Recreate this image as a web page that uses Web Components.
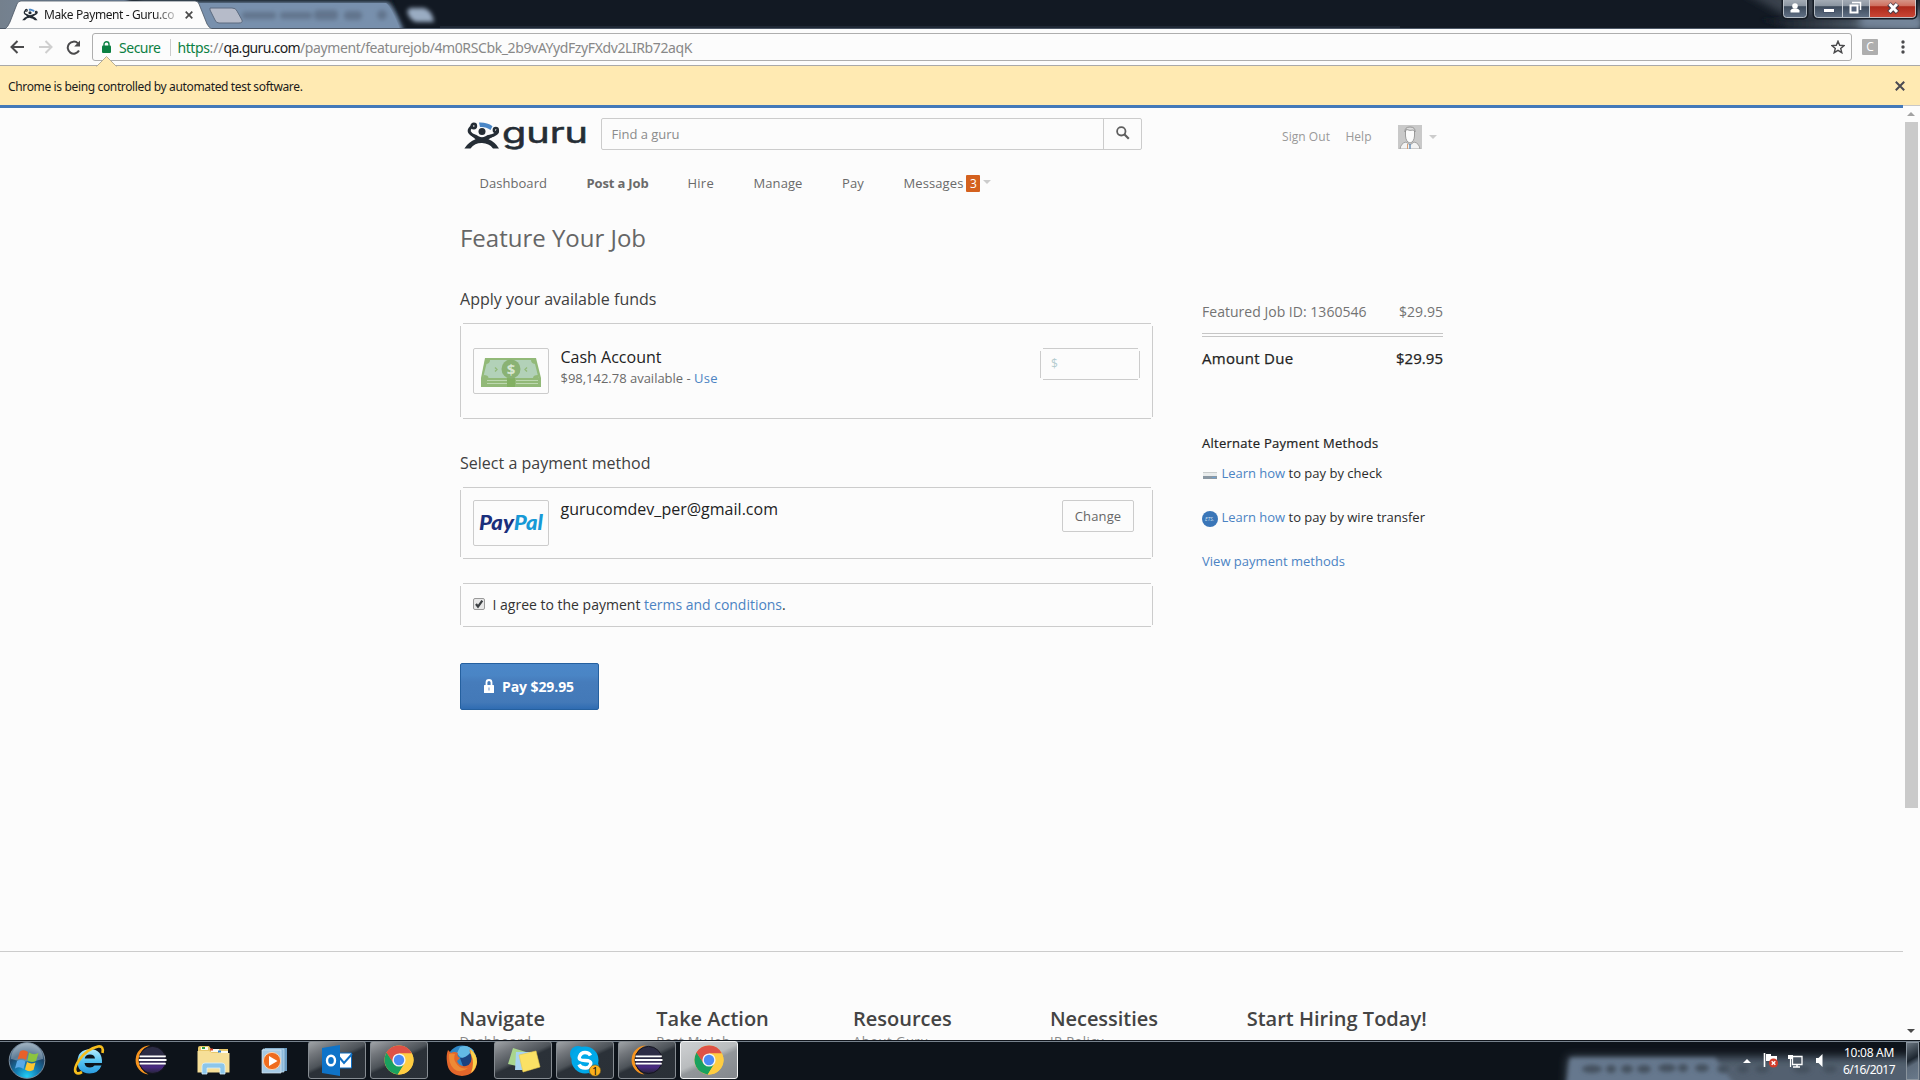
<!DOCTYPE html>
<html lang="en">
<head>
<meta charset="utf-8">
<title>Make Payment - Guru.com</title>
<style>
html,body{margin:0;height:100%;overflow:hidden;background:#fcfcfc}
body{font-family:"Open Sans","Noto Sans",sans-serif;font-size:13px;color:#2b2b2b}
</style>
</head>
<body>
<desktop-screen></desktop-screen>
<script>
/* Text run whose letter-spacing is adjusted to a given advance width (w). */
class FitText extends HTMLElement {
  constructor() {
    super();
    this.attachShadow({ mode: 'open' }).innerHTML =
      '<style>:host{display:inline-block;white-space:pre;flex:none}</style><slot></slot>';
  }
  connectedCallback() {
    const w = parseFloat(this.getAttribute('w'));
    if (!w) return;
    const n = this.textContent.length;
    const natural = this.getBoundingClientRect().width;
    if (natural && n) this.style.letterSpacing = ((w - natural) / n).toFixed(3) + 'px';
  }
}
customElements.define('fit-text', FitText);

const define = (name, html) => customElements.define(name, class extends HTMLElement {
  constructor() {
    super();
    this.attachShadow({ mode: 'open' });
    const t = document.createElement('template');
    t.innerHTML = '<style>*{box-sizing:border-box}svg{display:block;flex:none}</style>' + html;
    this.shadowRoot.append(document.importNode(t.content, true));
  }
});

/* Hairline frame whose four sides stop short of the corners. */
const frame = `border:1px solid transparent;background-origin:border-box;background-clip:border-box;background-repeat:no-repeat;
background-image:linear-gradient(#ccc,#ccc),linear-gradient(#ccc,#ccc),linear-gradient(#ccc,#ccc),linear-gradient(#ccc,#ccc);
background-position:50% 0,50% 100%,0 50%,100% 50%;
background-size:calc(100% - 5px) 1px,calc(100% - 5px) 1px,1px calc(100% - 5px),1px calc(100% - 5px);`;

/* ---------- icons ---------- */
define('guru-figure', `<style>:host{display:block;flex:none}svg{width:100%;height:100%}</style>
<svg viewBox="0 0 36 27">
 <path d="M15 .6C20 .3 25 1.5 28.500 4.200L26.500 8C23.500 5.600 19.500 4.600 16 5z" fill="#4a87c7"/>
 <g fill="none" stroke="#252d35" stroke-linecap="round">
  <circle cx="9.800" cy="4" r="1.300" stroke-width="4.200"/>
  <path d="M7.200 5C3.500 8.500 5 11.500 10.500 14" stroke-width="3"/>
  <path d="M25.500 14.500Q34 12 33.500 9" stroke-width="3.200"/>
  <circle cx="31.800" cy="8" r="1.200" stroke-width="4"/>
 </g>
 <circle cx="18" cy="9.600" r="3.500" fill="#252d35"/>
 <path d="M6 12.500Q12 11.800 14.500 14.200Q18 16.200 21.500 14.200Q25 11.800 31 13.500L24.500 17.300Q31 20 35 26.400H29Q25 21.300 18 21.100T6.500 26.400H.4Q5 19.500 11.500 17.300z" fill="#252d35"/>
</svg>`);

define('ico-eclipse', `<style>:host{display:block;flex:none;width:32px;height:30px}</style>
<svg width="32" height="30" viewBox="0 0 32 30"><defs><linearGradient id="g" x2="0" y2="1"><stop offset=".5" stop-color="#2c2c45"/><stop offset=".75" stop-color="#4b2a85"/><stop offset="1" stop-color="#242437"/></linearGradient></defs>
<path d="M15 .5A14.600 14.600 0 0 0 13.500 29.600 15.500 15.500 0 0 1 15 .5z" fill="#f7941e"/>
<circle cx="17.500" cy="15" r="13.600" fill="url(#g)" stroke="#14141f"/>
<path d="M4.500 11.300H30.800M3.800 15H31.500M4.500 18.700H30.800" stroke="#fff" stroke-width="1.800"/></svg>`);

define('ico-chrome', `<style>:host{display:block;flex:none;width:30px;height:30px}</style>
<svg width="30" height="30" viewBox="0 0 30 30">
<circle cx="15" cy="15" r="14.500" fill="#ffcd42"/>
<path d="M15 15L2.440 7.750A14.500 14.500 0 0 1 27.900 8.400H15z" fill="#de5246"/>
<path d="M2.440 7.750A14.500 14.500 0 0 0 13.800 29.450L20.700 18.300 15 15 9.300 18.300z" fill="#1aa15f"/>
<path d="M15 8.400H27.900A14.500 14.500 0 0 1 13.800 29.450L20.700 18.300z" fill="#ffcd42"/>
<path d="M2.440 7.750L9.300 18.300 15 15V8.400L6 4z" fill="#de5246"/>
<path d="M2.440 7.750L9.500 18.500 6 22 1.500 19z" fill="#1aa15f"/>
<circle cx="15" cy="15" r="6.600" fill="#f4f4f4"/><circle cx="15" cy="15" r="5.200" fill="#4b8bf5"/></svg>`);

/* ---------- browser chrome ---------- */
define('tab-strip', `<style>
:host{display:flex;position:relative;height:29px;align-items:flex-start;padding-left:22px;background:#121923;overflow:hidden;font-family:"Noto Sans","Open Sans",sans-serif}
.bg{position:absolute;left:0;top:0}
guru-figure{width:16px;height:13px;margin:8px 6px 0 0;position:relative}
.t{position:relative;width:131px;overflow:hidden;font-size:12px;line-height:18px;margin-top:6px;color:#1a1a1a;-webkit-mask:linear-gradient(90deg,#000 110px,transparent 138px)}
.x{position:relative;margin:11px 0 0 10px}
</style>
<svg class="bg" width="1920" height="29">
 <defs>
  <filter id="b" x="-20%" y="-60%" width="140%" height="220%"><feGaussianBlur stdDeviation="4"/></filter>
  <filter id="c" x="-20%" y="-60%" width="140%" height="220%"><feGaussianBlur stdDeviation="2"/></filter>
  <linearGradient id="l"><stop stop-color="#74808d"/><stop offset="1" stop-color="#7890ad"/></linearGradient>
  <linearGradient id="r"><stop stop-color="#121923"/><stop offset=".45" stop-color="#39434e"/><stop offset="1" stop-color="#6f8193"/></linearGradient>
  <linearGradient id="gl" x2="0" y2="1"><stop stop-color="#b9bfc7"/><stop offset=".45" stop-color="#8c96a2"/><stop offset=".5" stop-color="#3e4b5c"/><stop offset="1" stop-color="#65758a"/></linearGradient>
  <linearGradient id="rd" x2="0" y2="1"><stop stop-color="#dbaea2"/><stop offset=".45" stop-color="#cf7060"/><stop offset=".5" stop-color="#ad2a1b"/><stop offset="1" stop-color="#cb4636"/></linearGradient>
 </defs>
 <rect width="1920" height="29" fill="#121923"/>
 <path d="M0 0H140V29H0z" fill="url(#l)"/>
 <path d="M128-4L390-4 404 34H128z" fill="#0d141d" filter="url(#c)"/>
 <path d="M140 2H388Q394 6 404 31H140z" fill="#7890ad" filter="url(#c)"/>
 <path d="M196 3H386Q391 6 400 29H205z" fill="#7890ad"/>
 <g fill="#62758d" filter="url(#c)"><rect x="242" y="12" width="34" height="7" rx="3"/><rect x="280" y="12" width="32" height="7" rx="3"/><rect x="314" y="10" width="24" height="10" rx="4"/><rect x="344" y="11" width="18" height="9" rx="4"/><circle cx="382" cy="15" r="5"/></g>
 <path d="M410 8H424Q432 10 434 22H416Q409 20 407 11z" fill="#9aacc2" filter="url(#c)"/>
 <path d="M210 8H232Q236 8 237 11L242 20Q243 23 239 23H219Q216 23 215 20L210 10z" fill="#b6bbc9" stroke="#5c6b80"/>
 <path d="M440 29V26H1400V29z" fill="#1f2835"/>
 <path d="M1740-10L1790 18 1920 26V0z" fill="#3a434d" filter="url(#b)"/>
 <path d="M1760 19H1920V29H1790z" fill="url(#r)" filter="url(#c)"/>
 <path d="M1860 10H1920V29H1860z" fill="#74859a" filter="url(#b)"/>
 <rect x="1782.500" y="-5" width="25" height="23.500" rx="4" fill="url(#gl)" stroke="#151b24" stroke-width="2"/>
 <rect x="1783.500" y="-5" width="23" height="22.500" rx="3" fill="none" stroke="#d5dbe1" stroke-opacity=".8"/>
 <path d="M1790.500 12.500v-2q1-2 3-2h3q2 0 3 2v2z" fill="#fff"/><circle cx="1795" cy="6" r="2.800" fill="#fff"/>
 <rect x="1813.500" y="-5" width="103" height="23.500" rx="4" fill="url(#gl)" stroke="#151b24" stroke-width="2"/>
 <path d="M1870-4H1916V14Q1916 17.500 1912 17.500H1870z" fill="url(#rd)"/>
 <rect x="1814.500" y="-5" width="101" height="22.500" rx="3" fill="none" stroke="#d5dbe1" stroke-opacity=".8"/>
 <path d="M1842.500 0V17M1869.500 0V17" stroke="#c9ced4"/>
 <rect x="1823.500" y="8.500" width="11" height="4" fill="#fff" stroke="#46536a"/>
 <path d="M1852 2.500H1860.500V10" stroke="#fff" stroke-width="1.500" fill="none"/><path d="M1850.500 5.500h7v7h-7z" fill="#56647a" stroke="#fff" stroke-width="2"/>
 <path d="M1889 4L1897.500 12.500M1897.500 4L1889 12.500" stroke="#4b3b46" stroke-width="5"/><path d="M1889.500 4L1897 12M1897 4L1889.500 12" stroke="#fff" stroke-width="3"/>
 <path d="M5 29Q8 27 10 22L17 4Q18 1 21 1H195Q198 1 199 4L207 24Q209 28 212 29z" fill="#fcfcfc" stroke="#4a5563" stroke-width=".8"/>
 <path d="M0 28.500H5M212 28.500H1920" stroke="#4c5766"/>
</svg>
<guru-figure></guru-figure><div class="t"><fit-text w="130">Make Payment - Guru.co</fit-text></div>
<svg class="x" width="8" height="8"><path d="M.7.7L7.300 7.300M7.300.7L.7 7.300" stroke="#4a4a4a" stroke-width="1.700"/></svg>`);

define('browser-toolbar', `<style>
:host{display:flex;height:36px;align-items:center;background:#fcfcfc;padding:0 15px 0 10px;font-family:"Noto Sans","Open Sans",sans-serif;font-size:14px;box-sizing:border-box}
.nav{display:flex;width:82px;gap:13px;align-items:center}
.omni{display:flex;flex:1;height:28px;border:1px solid #aeaeae;border-radius:3px;align-items:center;padding:0 6px 0 9px;margin-right:10px}
.g{color:#0b8043}.d{color:#888}.k{color:#1c1c1c}
.sep{width:1px;height:17px;background:#ccc;margin:0 7px 0 9px}
.u{display:flex;flex:1}
.ext{width:16px;height:16px;background:#aeaeae;border-radius:1px;color:#fff;font:12px/16px "Open Sans",sans-serif;text-align:center;margin-right:23px}
</style>
<div class="nav">
<svg width="15" height="14" viewBox="0 0 15 14"><path d="M14 7H2M7.500 1L1.500 7l6 6" fill="none" stroke="#4a4a4c" stroke-width="2"/></svg>
<svg width="15" height="14" viewBox="0 0 15 14"><path d="M1 7H13M7.500 1l6 6-6 6" fill="none" stroke="#cfcfcf" stroke-width="2"/></svg>
<svg width="15" height="15" viewBox="0 0 15 15"><path d="M13 10.500A6 6 0 1 1 12 3.400" fill="none" stroke="#4a4a4c" stroke-width="2"/><path d="M14 .6V6.500H8.200z" fill="#4a4a4c"/></svg>
</div>
<div class="omni">
<svg width="9" height="12" viewBox="0 0 9 12" style="margin-right:8px"><path d="M2 5V3.200a2.500 2.500 0 0 1 5 0V5" fill="none" stroke="#0b8043" stroke-width="1.400"/><rect y="4.500" width="9" height="7.500" rx="1" fill="#0b8043"/></svg>
<fit-text class="g" w="41.500">Secure</fit-text><span class="sep"></span>
<div class="u"><fit-text class="g" w="32">https</fit-text><fit-text class="d" w="14">://</fit-text><fit-text class="k" w="76.500">qa.guru.com</fit-text><fit-text class="d" w="392">/payment/featurejob/4m0RSCbk_2b9vAYydFzyFXdv2LIRb72aqK</fit-text></div>
<svg width="14" height="14" viewBox="0 0 14 14"><path d="M7 1.200L8.700 5.300 13 5.600 9.700 8.400 10.800 12.700 7 10.300 3.200 12.700 4.300 8.400 1 5.600 5.300 5.300z" fill="none" stroke="#4a4a4c" stroke-width="1.400"/></svg>
</div>
<div class="ext">C</div>
<svg width="4" height="14"><g fill="#4a4a4c"><circle cx="2" cy="2" r="1.700"/><circle cx="2" cy="7" r="1.700"/><circle cx="2" cy="12" r="1.700"/></g></svg>`);

define('info-bar', `<style>
:host{display:flex;height:40px;box-sizing:border-box;position:relative;border-top:1px solid #a9a9a9;background:#ffeab2;align-items:center;justify-content:space-between;padding:2px 15px 0 8px;font:12px "Noto Sans","Open Sans",sans-serif;color:#1b1b1b}
.n{position:absolute;left:96px;top:-10px}
</style>
<svg class="n" width="21" height="11"><path d="M.5 10.500L10.500.500 20.500 10.500" fill="#ffeab2" stroke="#b5ad96"/><path d="M1.500 10.500H19.500" stroke="#ffeab2"/></svg>
<fit-text w="294.500">Chrome is being controlled by automated test software.</fit-text>
<svg width="10" height="10" style="margin-top:-2px"><path d="M.8.8L9.200 9.200M9.200.8L.8 9.200" stroke="#4a4a52" stroke-width="2"/></svg>`);

define('scroll-bar', `<style>
:host{display:flex;flex-direction:column;align-items:center;width:17px;background:#fcfcfc;border-top:1px solid #c8c8c8;box-sizing:border-box;padding:6px 1px 7px 0}
.th{width:13px;height:686px;background:#cacaca;margin:6px 0 auto 1px}
</style>
<svg width="8" height="4"><path d="M0 4L4 0 8 4z" fill="#a2a2a2"/></svg><div class="th"></div><svg width="8" height="4"><path d="M0 0L4 4 8 0z" fill="#4a4a4a"/></svg>`);

/* ---------- page header ---------- */
define('guru-logo', `<style>:host{display:flex;width:124px;height:30px}guru-figure{width:36px;height:27px}</style>
<guru-figure></guru-figure>
<svg width="86" height="30" style="margin-left:2px;overflow:visible"><text x="0" y="20.500" textLength="86" lengthAdjust="spacingAndGlyphs" font-family="Inter" font-weight="400" font-size="29" fill="#252d35" stroke="#252d35" stroke-width=".5">guru</text></svg>`);

define('search-box', `<style>
:host{display:flex;width:541px;height:32px;box-sizing:border-box;border:1px solid #ccc;border-radius:2px;background:#fcfcfc}
.f{flex:1;padding-left:9.500px;line-height:31px;color:#8b8b8b}
.b{width:38px;border-left:1px solid #ccc;display:flex;align-items:center;justify-content:center;padding-bottom:2px}
</style>
<div class="f"><fit-text w="68">Find a guru</fit-text></div>
<div class="b"><svg width="14" height="14" viewBox="0 0 14 14"><circle cx="5.300" cy="5.300" r="4.200" fill="none" stroke="#5f5f5f" stroke-width="1.800"/><path d="M8.300 8.300L12.800 12.800" stroke="#5f5f5f" stroke-width="2.200"/></svg></div>`);

define('user-links', `<style>
:host{display:flex;color:#999;font-size:12px;line-height:18px;align-items:flex-start}
.a{margin:4px 7px 0 26px}
</style>
<fit-text w="48" style="margin:7px 15.500px 0 0">Sign Out</fit-text><fit-text w="26" style="margin-top:7px">Help</fit-text>
<svg class="a" width="24" height="24" viewBox="0 0 24 24"><rect width="24" height="24" fill="#c9c9c9"/><path d="M2 24Q3 18 8 17L12 20 16 17Q21 18 22 24z" fill="#f3f3f3" stroke="#929292" stroke-width=".8"/><path d="M7.500 6Q7.500 3 12 3T16.500 6V11Q16 17 12 18Q8 17 7.500 11z" fill="#fbfbfb" stroke="#929292" stroke-width=".9"/><path d="M7 7Q6.500 2 12 2T17 7L15.500 5Q12 6 8.500 4.500z" fill="#ddd" stroke="#888" stroke-width=".8"/><path d="M12 19V24" stroke="#6d93ba" stroke-width="1.500"/><path d="M9.500 19V24" stroke="#d59b72"/></svg>
<svg width="8" height="4" style="margin-top:14px"><path d="M0 0H8L4 4z" fill="#ccc"/></svg>`);

define('nav-menu', `<style>
:host{display:flex;height:18px;line-height:18px;color:#6a6a6a;align-items:center}
b{font-weight:700}
.n{background:#d4611e;color:#fff;width:14px;height:17px;border-radius:1px;font-size:12px;line-height:17px;text-align:center;margin:0 3px 0 3px}
</style>
<fit-text w="67.500" style="margin-right:39.500px">Dashboard</fit-text>
<b style="margin-right:39px"><fit-text w="62">Post a Job</fit-text></b>
<fit-text w="26.500" style="margin-right:39.500px">Hire</fit-text>
<fit-text w="49" style="margin-right:39.500px">Manage</fit-text>
<fit-text w="22" style="margin-right:39.500px">Pay</fit-text>
<fit-text w="60">Messages</fit-text><span class="n">3</span>
<svg width="8" height="4" style="margin-top:-2px"><path d="M0 0H8L4 4z" fill="#ccc"/></svg>`);

/* ---------- payment form ---------- */
define('outline-box', `<style>
:host{display:flex;box-sizing:border-box;width:693px;${frame}}
::slotted(*){flex:none}
</style><slot></slot>`);

define('thumb-box', `<style>
:host{display:flex;width:76px;height:46px;box-sizing:border-box;border:1px solid #ccc;border-radius:2px;align-items:center;justify-content:center;margin-right:11.500px}
</style><slot></slot>`);

define('cash-icon', `<style>:host{display:block;margin-top:2px}</style>
<svg width="60" height="29" viewBox="0 0 60 29"><path d="M4 0H55L60 20V29H0V20z" fill="#92b978"/><path d="M6.500 2H53L57.500 20H2z" fill="#b2d1b8"/><path d="M4.500 6Q9 6 9 2H6zM55 6Q50 6 50 2h3.500zM2.500 17q5 0 5 3H2zM57 17q-5 0-5 3h5.500z" fill="#92b978"/>
<path d="M6 22.500H26M35 22.500H57M6 25.500H26M35 25.500H57" stroke="#bdd8b0" stroke-width="1"/>
<rect x="26" y="20" width="8" height="9" fill="#82b062"/><ellipse cx="30" cy="11" rx="9.500" ry="9.500" fill="#8ab274"/>
<text x="30" y="16.500" text-anchor="middle" font-family="Open Sans" font-weight="700" font-size="15" fill="#d6e6d0">$</text>
<path d="M14 9.500l2 2-2 2M46 9.500l-2 2 2 2" stroke="#92b978" fill="none" stroke-width="1.300"/></svg>`);

define('paypal-mark', `<style>:host{display:block}svg{overflow:visible}</style>
<svg width="66" height="32"><text x="1" y="22.500" font-family="Lato" font-style="italic" font-weight="900" font-size="20" textLength="64" lengthAdjust="spacingAndGlyphs" fill="#1a2f7c">Pay<tspan fill="#1799d6">Pal</tspan></text></svg>`);

define('pay-form', `<style>
:host{display:flex;flex-direction:column;width:693px;align-items:flex-start}
h1{margin:0;font-weight:400;font-size:24px;line-height:32px;color:#666}
h2{margin:0;font-weight:400;font-size:16px;line-height:24px;color:#404040}
.col{display:flex;flex-direction:column;flex:1 1 auto}
.big{font-size:16px;line-height:22px;color:#222}
.m{display:flex;line-height:20px;color:#6a6a6a}
a{color:#4b83c3}
.amt{width:100px;height:32px;${frame}padding-left:10px;line-height:29px;font-size:12px;color:#b4cccf}
.chg{width:72px;height:32px;border:1px solid #ccc;border-radius:2px;line-height:30px;text-align:center;color:#666}
.ag{font-size:14px;line-height:20px;display:flex;color:#333}
.pay{display:flex;width:139px;height:47px;border:1px solid #25609f;border-radius:2px;background:linear-gradient(#4b87c8,#4a85c5 25%,#467cbb 40%,#4379b8 85%,#2f6cb2);align-items:center;padding-left:23px;color:#fff;font-size:14px;font-weight:700;margin-top:36px;box-sizing:border-box}
</style>
<h1><fit-text w="186">Feature Your Job</fit-text></h1>
<h2 style="margin-top:33px"><fit-text w="196.500">Apply your available funds</fit-text></h2>
<outline-box style="height:96px;margin-top:12px;padding:24px 12px 0 12px">
 <thumb-box><cash-icon></cash-icon></thumb-box>
 <div class="col" style="margin-top:-2px"><div class="big"><fit-text w="101">Cash Account</fit-text></div>
 <div class="m"><fit-text w="133.500">$98,142.78 available - </fit-text><a><fit-text w="24">Use</fit-text></a></div></div>
 <div class="amt">$</div>
</outline-box>
<h2 style="margin-top:32px"><fit-text w="190.500">Select a payment method</fit-text></h2>
<outline-box style="height:72px;margin-top:12px;padding:12px 18px 0 12px">
 <thumb-box><paypal-mark></paypal-mark></thumb-box>
 <div class="col" style="margin-top:-2px"><div class="big"><fit-text w="217.500">gurucomdev_per@gmail.com</fit-text></div></div>
 <div class="chg"><fit-text w="46.500">Change</fit-text></div>
</outline-box>
<outline-box style="height:44px;margin-top:24px;padding:11px 12px 0 12px">
 <svg width="12" height="12" style="margin:3px 7.500px 0 0"><rect x=".5" y=".5" width="11" height="11" rx="1.500" fill="#e8e8e8" stroke="#9a9a9a"/><path d="M3 6L5 8.700 9.300 2.600" fill="none" stroke="#3b3f42" stroke-width="2.200"/></svg>
 <div class="ag"><fit-text w="151.500">I agree to the payment </fit-text><a><fit-text w="138">terms and conditions</fit-text></a>.</div>
</outline-box>
<div class="pay"><svg width="10" height="14" viewBox="0 0 10 14" style="margin:-1px 8px 0 0"><path d="M2.500 7V3.500a2.500 2.500 0 0 1 5 0V7" fill="none" stroke="#fff" stroke-width="1.800"/><rect y="6" width="10" height="8" rx=".5" fill="#fff"/><path d="M5 8.500v3" stroke="#7ea2cf" stroke-width="1.200"/></svg><fit-text w="72">Pay $29.95</fit-text></div>`);

define('order-summary', `<style>
:host{display:flex;flex-direction:column;width:241px;color:#2b2b2b}
.r{display:flex;justify-content:space-between;line-height:20px;font-size:14px;color:#737373}
.dbl{height:4px;border:1px solid #c6c6c6;border-left:0;border-right:0;margin:11px 0 11px}
.due{color:#222;font-size:15px;font-weight:500;-webkit-text-stroke:.25px #222}
h3{margin:66px 0 0;font-size:13px;line-height:18px;font-weight:500;color:#222;-webkit-text-stroke:.2px #222}
.l{display:flex;line-height:18px;align-items:flex-start}
a{color:#4b83c3}
</style>
<div class="r"><fit-text w="164.500">Featured Job ID: 1360546</fit-text><fit-text w="44">$29.95</fit-text></div>
<div class="dbl"></div>
<div class="r due"><fit-text w="91.500">Amount Due</fit-text><fit-text w="47">$29.95</fit-text></div>
<h3><fit-text w="176.500">Alternate Payment Methods</fit-text></h3>
<div class="l" style="margin-top:12px"><svg width="14" height="7" style="margin:8px 4.500px 0 1px"><path d="M0 0H14V7H0z" fill="#e9ecec"/><path d="M0 .5H14" stroke="#c9cdcd"/><path d="M0 4H14V7H0z" fill="#8b98a3"/><path d="M9 5.500h4" stroke="#6fa0cf"/></svg><a><fit-text w="67">Learn how </fit-text></a><fit-text w="93.500">to pay by check</fit-text></div>
<div class="l" style="margin-top:26px"><svg width="16" height="16" style="margin:3px 3.500px 0 0"><circle cx="8" cy="8" r="8" fill="#3a76b8"/><text x="7.500" y="9.500" text-anchor="middle" font-family="Open Sans" font-style="italic" font-size="5" fill="#d5e3f2">ETS.</text></svg><a><fit-text w="67">Learn how </fit-text></a><fit-text w="136.500">to pay by wire transfer</fit-text></div>
<div class="l" style="margin-top:25px"><a><fit-text w="143">View payment methods</fit-text></a></div>`);

define('footer-column', `<style>
:host{display:flex;flex-direction:column;align-items:flex-start;width:196.800px;flex:none;color:#888;line-height:18px}
::slotted(h4){margin:0;font-size:20px;line-height:26px;font-weight:600;color:#444}
</style><slot></slot>`);

define('guru-page', `<style>
:host{display:flex;flex-direction:column;flex:1;background:#fcfcfc;border-top:3px solid #4379b9;overflow:hidden;height:935px;box-sizing:border-box}
.top,nav-menu,.main,.foot{flex:none}
.top{display:flex;padding:10px 0 0 464px;height:61px}
.main{display:flex;padding:22px 0 0 460px;height:751px}
.foot{display:flex;border-top:1px solid #ccc;padding:54px 0 0 459.500px;height:140px}
search-box{margin:0 140px 0 13px}
user-links{margin-top:3px}
guru-logo{margin-top:4px}
nav-menu{margin:5px 0 8px 479.500px}
order-summary{margin:80px 0 0 49px}
</style>
<div class="top"><guru-logo></guru-logo><search-box></search-box><user-links></user-links></div>
<nav-menu></nav-menu>
<div class="main"><pay-form></pay-form><order-summary></order-summary></div>
<div class="foot">
<footer-column><h4><fit-text w="85.500">Navigate</fit-text></h4><fit-text w="72">Dashboard</fit-text></footer-column>
<footer-column><h4><fit-text w="112.500">Take Action</fit-text></h4><fit-text w="74">Post My Job</fit-text></footer-column>
<footer-column><h4><fit-text w="98.500">Resources</fit-text></h4><fit-text w="75.500">About Guru</fit-text></footer-column>
<footer-column><h4><fit-text w="108">Necessities</fit-text></h4><fit-text w="54">IP Policy</fit-text></footer-column>
<footer-column><h4><fit-text w="180">Start Hiring Today!</fit-text></h4></footer-column>
</div>`);

/* ---------- taskbar ---------- */
define('task-button', `<style>
:host{display:flex;width:58px;height:38px;box-sizing:border-box;border:1px solid #868c92;border-radius:3px;align-items:center;justify-content:center;margin-right:4px;flex:none;background:linear-gradient(155deg,#a0a4a8 0,#73777c 22%,#4d5359 45%,#2b3138 52%,#2a3037)}
:host([active]){border-color:#f2f3f4;background:linear-gradient(155deg,#cfd1d3 0,#b9bcbe 45%,#92969a 55%,#83878c)}
:host([plain]){border-color:transparent;background:none}
</style><slot></slot>`);

define('task-bar', `<style>
:host{display:flex;height:40px;background:#0d131a;position:relative;border-top:1px solid #11161d;box-shadow:inset 0 1px #77828d;align-items:flex-start;box-sizing:border-box;padding:0 1px 0 8px;overflow:hidden}
.glow{position:absolute;left:1540px;top:1px}
.orb{margin:1px 22px 0 0}
.tray{display:flex;margin-left:auto;position:relative;height:39px;align-items:center}
.clk{width:54px;text-align:center;color:#fff;font:12px/17px "Noto Sans","Open Sans",sans-serif;margin:1px 10px 0 18px;display:flex;flex-direction:column;align-items:center}
.sd{width:13px;height:38px;border:1px solid #8a949e;background:linear-gradient(150deg,#6a7580,#1d2630 45%,#5d6b7b 60%,#69798b)}
svg{overflow:visible}
</style>
<svg class="glow" width="380" height="38"><defs><filter id="b" x="-20%" y="-60%" width="140%" height="220%"><feGaussianBlur stdDeviation="5"/></filter><filter id="c" x="-20%" y="-60%" width="140%" height="220%"><feGaussianBlur stdDeviation="2"/></filter></defs>
<path d="M28 15H400V50H26z" fill="#52606f" filter="url(#b)"/><path d="M30 16H175L200 50H26z" fill="#66788e" filter="url(#c)"/>
<g fill="#45515e" filter="url(#c)"><ellipse cx="52" cy="27" rx="10" ry="4"/><ellipse cx="71" cy="27" rx="5" ry="4"/><ellipse cx="87" cy="27" rx="6" ry="4"/><ellipse cx="104" cy="27" rx="7" ry="4"/><ellipse cx="127" cy="26" rx="9" ry="4"/><ellipse cx="143" cy="26" rx="5" ry="4"/><ellipse cx="162" cy="26" rx="7" ry="4"/><ellipse cx="183" cy="27" rx="6" ry="4"/><ellipse cx="203" cy="27" rx="6" ry="4"/><ellipse cx="222" cy="27" rx="7" ry="4"/><ellipse cx="262" cy="27" rx="9" ry="4"/><ellipse cx="290" cy="27" rx="7" ry="4"/></g></svg>
<svg class="orb" width="38" height="37" viewBox="0 0 38 37"><defs><radialGradient id="o" cx=".5" cy=".95" r=".9"><stop stop-color="#22d0f5"/><stop offset=".35" stop-color="#147fb5"/><stop offset=".7" stop-color="#1c4468"/><stop offset="1" stop-color="#7d93a6"/></radialGradient></defs>
<circle cx="19" cy="18.500" r="17.800" fill="url(#o)" stroke="#7a8ea0"/><path d="M3 17A16 16 0 0 1 35 17Q19 22 3 17z" fill="#c5d4df" opacity=".4"/>
<path d="M12 9.500Q16 7 20 10L18 18Q14 15.500 9.500 17.500z" fill="#e9602a"/><path d="M21 10.500Q26 13.500 30.500 11L28 19Q23.500 21 19.500 18.500z" fill="#8cc43e"/><path d="M9 19Q13.500 17 17.500 19.500L15.500 27Q11.500 24 7 26.500z" fill="#5aa9e6"/><path d="M19 20Q23 22.500 27.500 20.500L25.500 28Q21 30.500 17 27.500z" fill="#fdc62f"/></svg>
<task-button plain style="width:42px;margin:0 20px 0 0"><svg width="32" height="32" viewBox="0 0 32 32"><defs><linearGradient id="e" x2="0" y2="1"><stop stop-color="#b6ecfd"/><stop offset=".5" stop-color="#57c4f2"/><stop offset="1" stop-color="#2a9bdf"/></linearGradient></defs><path d="M29 19H11.500Q12 23.500 17 23.500Q20 23.500 21.500 21.500H28.500Q25.500 29.500 16.500 29.500Q4.500 29 4.500 17.500T17 5Q29.500 5.500 29 19zM11.700 14.500H22Q21.500 10.500 17 10.500T11.700 14.500z" fill="url(#e)" fill-rule="evenodd"/><path d="M29.500 9Q31 1.500 25 2.500Q14 5 6.500 15.500Q-.500 26 3.500 29Q5.500 30 9 28" fill="none" stroke="#f6bd1c" stroke-width="2.600"/></svg></task-button>
<task-button plain style="width:42px;margin:0 20px 0 0"><ico-eclipse style="margin-left:-1px"></ico-eclipse></task-button>
<task-button plain style="width:42px;margin:0 20px 0 0"><svg width="33" height="30" viewBox="0 0 33 30"><path d="M1 3Q1 1 3 1H12L14 4H31V27H1z" fill="#e8c76a"/><path d="M4 2H11V5H4zM14 4H22V7H14zM22 6H31V9H22z" fill="#fbfbf2"/><path d="M5 3h3" stroke="#2c9b3c" stroke-width="2"/><path d="M13 4.500h3" stroke="#d8452b" stroke-width="2"/><path d="M21 6.500h3" stroke="#2d7fd0" stroke-width="2"/><path d="M.5 6H12L15 8H32.500V27.500H.5z" fill="#f6df98"/><path d="M5 29V21Q5 18 8 18H25Q28 18 28 21V29H23V23H10V29z" fill="#8cc6ea" stroke="#d9f0fc" stroke-width=".8"/></svg></task-button>
<task-button plain style="width:42px;margin:0 20px 0 0"><svg width="27" height="27" viewBox="0 0 27 27" style="margin-left:-2px"><path d="M4 1H26V24H4z" fill="#6899c0"/><path d="M2 2H23V25H2z" fill="#8db9da" stroke="#c5dfef" stroke-width=".7"/><path d="M1 3H20V26H1z" fill="#a6cae4" stroke="#d5e7f2" stroke-width=".7"/><circle cx="11" cy="14" r="8.600" fill="#ef6c1f" stroke="#fbd1ac"/><path d="M8 9L16.500 14 8 19z" fill="#fff"/></svg></task-button>
<task-button style="margin-left:-8px"><svg width="30" height="31" viewBox="0 0 30 31"><path d="M15 8H29.500V23H15z" fill="#fff" stroke="#0d6cc0"/><path d="M17 12L22 18 30 9" fill="none" stroke="#0f71c6" stroke-width="2"/><path d="M0 3L18 0V31L0 28z" fill="#0e73c8"/><ellipse cx="9" cy="15.500" rx="4" ry="4.800" fill="none" stroke="#fff" stroke-width="2.400"/></svg></task-button>
<task-button><ico-chrome></ico-chrome></task-button>
<task-button plain><svg width="31" height="31" viewBox="0 0 31 31"><circle cx="16" cy="15" r="14.500" fill="#2f86c5"/><path d="M14 2Q22-1 28 6Q24 9 22 14Q14 14 11 8z" fill="#63b9e5"/><path d="M14 13Q20 13 24 8L28 14Q27 24 18 24z" fill="#1b4280"/><path d="M2 5L5 8Q8 6 12 8Q10 11 14 13L11 16Q13 22 20 21Q27 19 25 10Q23 6 24 4Q31 9 31 17Q30 30 16 31Q2 30 1 17Q0 10 2 5z" fill="#e3662a"/><path d="M24 4Q31 9 31 17Q30 24 25 28Q29 18 25 9z" fill="#fbd34b"/><path d="M3 9Q5 8 9 9Q7 14 10 18Q14 25 22 23Q14 29 8 24Q2 18 3 9z" fill="#ee8a35"/></svg></task-button>
<task-button><svg width="33" height="26" viewBox="0 0 33 26"><path d="M6 1L19 5 14 20 1 17z" fill="#a9d58e"/><path d="M9 5H24V23H8z" fill="#a7d3f1"/><path d="M12 8L29 4 33 20 16 25z" fill="#fbe165" stroke="#e9c94b" stroke-width=".6"/></svg></task-button>
<task-button><svg width="30" height="31" viewBox="0 0 30 31"><circle cx="8" cy="9" r="8" fill="#00a4e4"/><circle cx="15" cy="15" r="13.500" fill="#00a9e9"/><circle cx="22" cy="22" r="7" fill="#00a4e4"/><path d="M20.500 10.500Q19 7.500 15 7.500T9.500 11.500T15 15.500T20.500 19.500T15 23Q10.500 23 9 19.500" fill="none" stroke="#fff" stroke-width="3.400"/><circle cx="25" cy="25.500" r="5.600" fill="#fbb01b" stroke="#6e5a20" stroke-width=".6"/><text x="25" y="29.500" text-anchor="middle" font-family="Noto Sans" font-size="10.500" fill="#111">1</text></svg></task-button>
<task-button><ico-eclipse></ico-eclipse></task-button>
<task-button active><ico-chrome></ico-chrome></task-button>
<div class="tray">
<svg width="8" height="4" style="margin-right:12px"><path d="M0 4L4 0 8 4z" fill="#fff"/></svg>
<svg width="16" height="15" style="margin-right:9px"><path d="M1.500 0V14" stroke="#fff" stroke-width="1.600"/><path d="M3 1H8V3H14V8H3z" fill="#fff"/><circle cx="10.500" cy="10" r="4.600" fill="#d23c2a"/><path d="M8.700 8.200l3.600 3.600M12.300 8.200L8.700 11.800" stroke="#fff" stroke-width="1.400"/></svg>
<svg width="15" height="14" style="margin-right:13px"><path d="M4.500 2.500H14V10.500H4.500z" fill="#4b5663" stroke="#fff" stroke-width="1.300"/><path d="M5 13H12M9 10V13" stroke="#fff" stroke-width="1.500"/><path d="M0 1H5V5H0z" fill="#fff"/><path d="M2.500 5V13" stroke="#fff" stroke-width="1.200"/></svg>
<svg width="8" height="13"><path d="M0 4H2.500L6.500 0V13L2.500 9H0z" fill="#fff"/></svg>
<div class="clk"><fit-text w="50">10:08 AM</fit-text><fit-text w="52">6/16/2017</fit-text></div>
<div class="sd"></div></div>`);

define('desktop-screen', `<style>
:host{display:flex;flex-direction:column;width:1920px;height:1080px;overflow:hidden}
.view{display:flex;height:935px}
info-bar,tab-strip,browser-toolbar,task-bar{flex:none}
</style>
<tab-strip></tab-strip><browser-toolbar></browser-toolbar><info-bar></info-bar>
<div class="view"><guru-page></guru-page><scroll-bar></scroll-bar></div>
<task-bar></task-bar>`);
</script>
</body>
</html>
